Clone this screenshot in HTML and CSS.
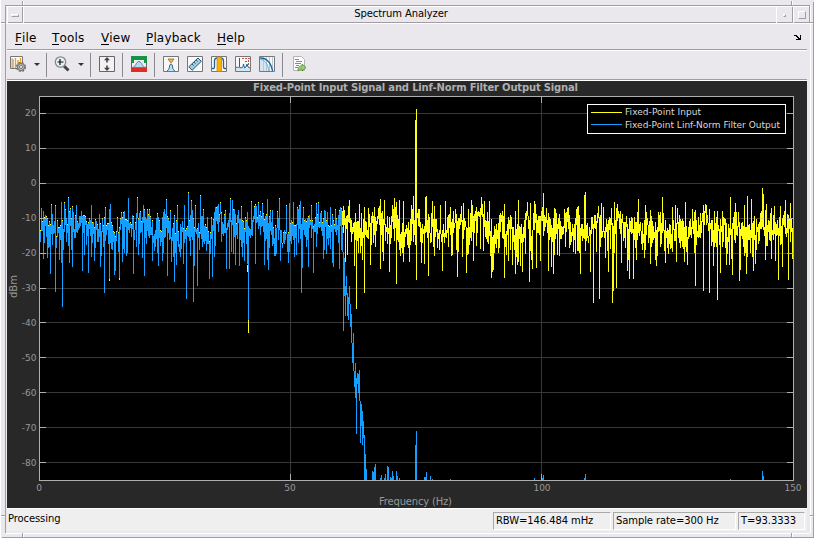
FILE: index.html
```html
<!DOCTYPE html>
<html lang="en">
<head>
    <meta charset="UTF-8">
    <title>Spectrum Analyzer</title>
    <link rel="stylesheet" href="styles.css">
</head>
<body>
    <div class="window">
        <svg class="frame" width="814" height="538" shape-rendering="crispEdges">
            <path stroke="#fff" d="M0.5 0V538M6 6.5H809M1 23.5H7M807 23.5H813M23.5 1V23M792.5 1V6M6 533.5H810M810.5 6V533M1 516.5H6M810 516.5H813M23.5 533V538M792.5 533V538"/>
            <path stroke="#a09ea2" d="M5 5.5H809M5.5 5V533M809.5 5V7M1 22.5H6M809 22.5H813M22.5 1V6M791.5 1V6M813.5 2V538M2 537.5H814M1 515.5H6M810 515.5H813M22.5 533V538M791.5 533V538"/>
        </svg>
        <div class="titlebar">
            <div class="win-btn menu-btn"><span></span></div>
            <div class="title">Spectrum Analyzer</div>
            <div class="win-btn min-btn"><span></span></div>
            <div class="win-btn max-btn"><span></span></div>
        </div>
        <div class="menubar">
            <div class="menu m-file"><span class="key">F</span>ile</div>
            <div class="menu m-tools"><span class="key">T</span>ools</div>
            <div class="menu m-view"><span class="key">V</span>iew</div>
            <div class="menu m-play"><span class="key">P</span>layback</div>
            <div class="menu m-help"><span class="key">H</span>elp</div>
            <svg class="dock" width="8" height="6" shape-rendering="crispEdges"><path d="M0 0h3v1h1v1h1v1h1V0h1v5H2V4h2V3H3V2H2V1H0z"/></svg>
        </div>
        <div class="toolbar">
            <!-- settings -->
            <svg class="icon" width="18" height="18">
                <path fill="#fff" stroke="#777" d="M1.5 1.5h12v12h-12z"/>
                <path stroke="#e9a21c" stroke-width="1.4" d="M4 4v9M6.500 3v10M9 5v7M11.500 3v5"/>
                <path stroke="#aaa" d="M3 3v10"/>
                <circle cx="12" cy="12" r="4.300" fill="#aaa" stroke="#666" stroke-width="1.400" stroke-dasharray="2 1.400"/>
                <circle cx="12" cy="12" r="3.500" fill="#b8b8b8" stroke="#777"/>
                <circle cx="12" cy="12" r="1.500" fill="#fff" stroke="#777"/>
            </svg>
            <span class="arrow"></span>
            <span class="sep"></span>
            <!-- zoom -->
            <svg class="icon zoom" width="18" height="18">
                <path d="M11 11l4.500 4.500" stroke="#444" stroke-width="3"/>
                <circle cx="7.500" cy="7" r="5.200" fill="#e3f3f6" stroke="#888" stroke-width="1.300"/>
                <path d="M5 7.500h6M7.500 4.500v6" stroke="#111" stroke-width="1.200" transform="translate(-.5 -.5)"/>
            </svg>
            <span class="arrow"></span>
            <span class="sep"></span>
            <!-- autoscale -->
            <svg class="icon" width="18" height="18">
                <path fill="#f2f2f2" stroke="#666" d="M1.5 1.5h15v15h-15z"/>
                <path fill="#444" d="M9 2l3 3.200h-2.200v2.300H8.200V5.200H6zM9 16l3-3.200h-2.200v-2.300H8.200v2.300H6z"/>
            </svg>
            <span class="sep"></span>
            <!-- spectral mask -->
            <svg class="icon" width="18" height="18">
                <path fill="#eee" stroke="#666" d="M1.500 1.500h15v15h-15z"/>
                <path fill="#159447" d="M1 1h16v7h-3V5H4v3H1z"/>
                <path fill="#e22b22" d="M1 13h16v4H1z"/>
                <path fill="#b8dced" stroke="#4a87b0" d="M2 12.500c4 0 4-6 7-6s3 6 7 6z"/>
            </svg>
            <span class="sep"></span>
            <!-- peak finder -->
            <svg class="icon" width="18" height="18">
                <path fill="#f8f8f8" stroke="#777" d="M1.500 1.500h15v15h-15z"/>
                <path fill="#bfe0f0" stroke="#2c5d80" d="M5 16c3-1 2-7 4-7s1 6 4 7"/>
                <path fill="#f6b93b" stroke="#96691a" stroke-width=".8" d="M6 4h6L9.500 7.500h-1z"/>
            </svg>
            <!-- cursor measurements -->
            <svg class="icon" width="18" height="18">
                <path fill="#f8f8f8" stroke="#777" d="M1.500 1.500h15v15h-15z"/>
                <path fill="#a4cde2" stroke="#225777" d="M2.800 11.800L12 3l3.300 3.300-9.200 9z"/>
                <path stroke="#225777" d="M6 9l1.500 1.500M8 7l1.500 1.500M10 5l1.500 1.500"/>
            </svg>
            <!-- channel measurements -->
            <svg class="icon" width="18" height="18">
                <path fill="#f8f8f8" stroke="#777" d="M1.500 1.500h15v15h-15z"/>
                <path fill="none" stroke="#19649b" stroke-width="1.300" d="M2 13.500h1.500q1 0 1-2V6q0-3 3-3h3q3 0 3 3v5.500q0 2 1 2H16"/>
                <path fill="#ffad00" stroke="#c98100" stroke-width=".7" d="M7 2h4.500v14.500H7z"/>
            </svg>
            <!-- distortion -->
            <svg class="icon" width="18" height="18">
                <path fill="#f8f8f8" stroke="#777" d="M1.500 1.500h15v15h-15z"/>
                <path fill="#d3e6f1" d="M2 13h14v3H2z"/>
                <path fill="none" stroke="#19649b" d="M2 12.500l1.500-.5 1 1 1-1V3v9l1.500 1 2-1 .5-3 1 4 1.500-1 1-3 1 3 2 1"/>
                <path stroke="#c5533a" stroke-dasharray="2 1" d="M8 3.500h8M14.500 5v5M11 6.500h3"/>
            </svg>
            <!-- ccdf -->
            <svg class="icon" width="18" height="18">
                <path fill="#f8f8f8" stroke="#777" d="M1.500 1.500h15v15h-15z"/>
                <path fill="#d3e6f1" d="M2 4c5 1 8 5 9 12H2z"/>
                <path stroke="#b9c8d8" d="M5.500 2v14M8.500 2v14M11.500 2v14M14.500 2v14"/>
                <path fill="none" stroke="#19649b" stroke-width="1.300" d="M2 3c7 0 11 5 12.500 13"/>
                <path fill="none" stroke="#6dabd2" d="M2 4c5 1 8 5 9 12"/>
            </svg>
            <span class="sep"></span>
            <!-- generate script -->
            <svg class="icon" width="18" height="18">
                <path fill="#fff" stroke="#b5b5b5" d="M3.500 1.500h8l3 3v11h-11z"/>
                <path stroke="#888" d="M5 4.500h4M6 6.500h6M5 8.500h6M6 10.500h3M5 12.500h3"/>
                <path fill="#9bd16c" stroke="#50853a" stroke-width=".8" d="M8 16c0-4 1-5 4-5V9l4 3.500-4 3.500v-2c-2 0-2 1-4 2z"/>
            </svg>
        </div>
        <svg class="plot" id="plot" viewBox="7 81 800 427" width="800" height="427">
            <rect x="7" y="81" width="800" height="427" fill="#282828"/>
            <rect x="39" y="96" width="755" height="385"/>
            <g shape-rendering="crispEdges">
                <path id="yellow" fill="#ffff13"/>
                <path id="blue" fill="#139fff"/>
                <path id="dots" fill="#ffff13"/>
                <path id="grid" stroke="#afafaf" stroke-opacity=".32"/>
                <path id="ticks" stroke="#afafaf"/>
                <rect x="39.5" y="96.5" width="754" height="384" fill="none" stroke="#afafaf"/>
            </g>
            <text class="heading" x="253" y="91" textLength="325">Fixed-Point Input Signal and Linf-Norm Filter Output Signal</text>
            <g id="labels" class="axis"></g>
            <text class="label" x="379" y="505" textLength="73">Frequency (Hz)</text>
            <text class="label" transform="translate(17 298) rotate(-90)" textLength="23">dBm</text>
            <rect x="587.5" y="104.5" width="198" height="29" stroke="#fff" shape-rendering="crispEdges"/>
            <path d="M591 112.500h31" stroke="#ffff13" shape-rendering="crispEdges"/>
            <path d="M591 124.500h31" stroke="#139fff" shape-rendering="crispEdges"/>
            <text class="legend" x="625" y="115" textLength="76">Fixed-Point Input</text>
            <text class="legend" x="625" y="128" textLength="155">Fixed-Point Linf-Norm Filter Output</text>
        </svg>
        <div class="statusbar">
            <div class="state">Processing</div>
            <div class="cell rbw">RBW=146.484 mHz</div>
            <div class="cell rate">Sample rate=300 Hz</div>
            <div class="cell time">T=93.3333</div>
        </div>
    </div>
    <script src="plot.js"></script>
</body>
</html>
```
FILE: styles.css
```css
* {
    box-sizing: border-box;
}

body {
    margin: 0;
    background: #e9e8eb;
    font-family: "DejaVu Sans", Verdana, sans-serif;
    font-size: 10px;
    color: #000;
}

.window {
    position: relative;
    width: 814px;
    height: 538px;
    padding: 7px 7px 6px 7px;
    background: #eae8ed;
    overflow: hidden;
}

.frame {
    position: absolute;
    left: 0;
    top: 0;
    pointer-events: none;
}

/* title bar */
.titlebar {
    display: flex;
    width: 803px;
    height: 17px;
    border-bottom: 1px solid #fff;
    box-shadow: inset 0 -1px #a09ea2;
}

.title {
    flex: 1;
    padding-left: 3px;
    text-align: center;
    line-height: 14px;
    letter-spacing: -0.1px;
}

.win-btn {
    display: flex;
    align-items: center;
    justify-content: center;
    width: 17px;
    height: 16px;
    border-left: 1px solid #fff;
    border-right: 1px solid #a09ea2;
}

.menu-btn {
    width: 16px;
}

.win-btn span {
    border: 1px solid #a09ea2;
    border-top-color: #fff;
    border-left-color: #fff;
}

.menu-btn span {
    width: 8px;
    height: 3px;
}

.min-btn span {
    width: 3px;
    height: 3px;
}

.max-btn span {
    width: 8px;
    height: 8px;
}

/* menus */
.menubar {
    display: flex;
    align-items: center;
    height: 27px;
    width: 800px;
    padding: 0 5px 0 8px;
    border-bottom: 1px solid #fff;
    box-shadow: inset 0 -1px #a09ea2;
    font-size: 12px;
    letter-spacing: 0.15px;
}

.menu {
    padding-top: 2px;
    line-height: 24px;
    white-space: nowrap;
}

.key {
    display: inline-block;
    height: 13px;
    line-height: 13px;
    border-bottom: 1px solid #000;
}

.m-file { width: 37px; }
.m-tools { width: 49px; }
.m-view { width: 45px; }
.m-play { width: 71px; }

.dock {
    margin-left: auto;
    margin-top: 1px;
}

/* toolbar */
.toolbar {
    display: flex;
    align-items: center;
    height: 30px;
    padding: 0 0 3px 2px;
    border-bottom: 1px solid #fff;
    box-shadow: inset 0 -1px #a09ea2;
}

.icon {
    flex: none;
    margin-right: 6px;
}

.arrow {
    margin: 0 6px 0 1px;
    border: 3px solid transparent;
    border-top: 3px solid #333;
    border-bottom: 0;
}

.sep {
    width: 1px;
    height: 24px;
    margin-top: 2px;
    margin-right: 7px;
    background: #8c8a8c;
}

.zoom {
    margin-left: -1px;
}

/* plot */
.plot {
    display: block;
}

.heading {
    font-size: 10px;
    font-weight: bold;
    fill: #afafaf;
}

.axis {
    font-size: 9px;
    fill: #989898;
}

.label {
    font-size: 10px;
    fill: #989898;
}

.legend {
    font-size: 9px;
    fill: #d9d9d9;
}

/* status bar */
.statusbar {
    display: flex;
    gap: 2px;
    height: 23px;
    width: 800px;
    padding: 3px 2px 2px 1px;
    border-top: 1px solid #fff;
    background: #efefef;
    letter-spacing: -0.1px;
}

.state {
    width: 483px;
    line-height: 14px;
}

.cell {
    height: 18px;
    padding-left: 2px;
    line-height: 15px;
    white-space: nowrap;
    border: 1px solid #fff;
    border-top-color: #a9a9a9;
    border-left-color: #a9a9a9;
}

.rbw { width: 118px; }
.rate { width: 123px; }
.time { width: 67px; }
```
FILE: plot.js
```js
// x,value pairs: upper peaks and lower troughs of the spectrum, in plot pixels
const peaks = '40,230 43,211 47,218 55,205 61,202 64,202 68,197 76,205 81,211 85,216 91,205 99,214 105,207 110,204 117,217 121,212 128,198 137,197 143,205 147,209 163,212 166,199 170,210 174,215 177,205 184,205 188,192 191,200 195,205 200,195 203,209 207,217 211,217 215,207 218,204 220,202 230,198 232,200 238,210 247,212 251,201 258,202 262,203 267,199 272,210 279,198 286,205 289,203 293,202 297,207 303,207 309,215 311,205 316,203 318,202 324,210 327,212 330,207 335,209 342,211 346,216 349,200 359,204 361,213 364,207 368,208 374,207 378,208 384,200 392,205 399,200 403,201 411,205 413,196 419,209 425,197 426,196 432,201 440,205 445,201 450,207 455,209 463,203 471,200 476,207 480,208 484,201 489,201 499,215 504,204 515,211 518,200 525,213 530,203 534,201 543,193 554,208 564,209 568,207 577,207 584,195 585,192 591,217 594,215 601,203 603,207 614,202 619,214 625,222 631,217 638,199 645,205 650,210 658,212 662,197 672,207 675,205 685,202 692,209 702,213 706,205 714,211 722,211 730,197 735,203 744,205 747,196 751,199 762,188 763,194 766,204 774,206 780,206 785,200 790,203';
const troughs = '39,284 42,231 47,258 50,274 55,292 59,260 61,263 62,307 66,242 69,263 72,267 82,271 84,255 88,273 94,261 104,293 109,281 114,275 119,279 122,262 127,253 133,274 138,255 142,258 144,276 152,261 157,253 162,261 167,276 171,262 174,282 176,265 180,257 186,299 190,256 193,302 197,286 201,239 210,254 212,277 221,242 226,269 229,269 231,252 235,265 239,266 242,257 244,261 247,264 248,320 255,264 264,265 268,270 275,256 282,248 287,252 294,257 301,293 302,268 308,267 313,273 324,250 326,254 332,263 333,267 339,269 345,262 347,255 354,266 356,309 362,260 364,293 371,245 375,247 380,269 383,261 389,272 396,284 403,262 408,248 415,245 416,280 421,263 424,264 428,276 434,256 437,248 442,271 452,255 457,277 462,257 466,273 473,261 480,249 483,251 491,278 492,272 498,253 504,278 508,261 512,265 517,265 520,266 522,272 529,282 536,268 540,261 548,271 551,267 553,274 559,256 575,254 580,274 590,272 593,303 599,299 605,258 608,272 612,303 613,291 616,288 621,263 627,271 629,279 633,279 650,264 661,244 665,263 676,262 684,262 687,265 695,286 703,291 709,293 717,300 720,273 727,254 732,275 739,281 746,274 753,271 755,264 765,260 771,259 775,261 778,280 782,267 788,280 792,259';

// rolloff and leakage above the passband edge: x,top,bottom
const tail = '342,227,252 343,252,331 344,258,296 345,286,316 346,276,295 347,293,316 348,297,320 349,286,304 350,304,327 351,314,343 352,343,363 353,333,371 354,371,387 355,363,398 356,378,434 357,373,384 358,374,393 359,370,401 360,401,443 361,404,426 362,411,445 363,421,438 364,435,480 365,454,480 366,469,480 372,471,480 373,472,480 374,467,480 375,464,480 380,478,480 381,475,480 384,478,480 385,474,480 387,466,480 388,467,480 390,477,480 391,478,480 392,471,480 393,476,480 396,471,480 397,476,480 399,478,480 415,445,480 416,431,480 424,477,480 425,477,480 426,472,480 430,476,480 432,479,480 450,479,480 534,478,480 542,478,480 543,475,480 584,478,480 585,474,480 730,479,480 762,471,480 763,476,480';

const parse = s => s.split(' ').map(p => p.split(',').map(Number));
const hi = new Map(parse(peaks));
const lo = new Map(parse(troughs));

let seed = 41;
function rand() {
    seed = (seed * 1664525 + 1013904223) % 4294967296;
    return seed / 4294967296;
}

const bar = (x, a, b) => `M${x} ${a}h1V${b}h-1z`;
let blue = '', yellow = '', dots = '';
let level = 222;
let lastTop = 225, lastBottom = 240;

for (let x = 39; x < 793; x++) {
    // the noise level drifts slowly between columns
    level += (rand() - 0.5) * 14 + (222 - level) * 0.2;
    let top = hi.has(x) ? hi.get(x) : Math.round(level - 10 + rand() * 16);
    let bottom = lo.has(x) ? lo.get(x) : Math.round(Math.max(top, level) + 5 + rand() * rand() * 38);
    // neighbouring columns have to touch, the trace is one line
    if (!hi.has(x)) top = Math.min(top, lastBottom);
    if (!lo.has(x)) bottom = Math.max(bottom, lastTop);
    if (x < 342) {
        blue += bar(x, top, bottom);
        if (rand() < 0.55) dots += bar(x, top, top + 1);
    } else {
        yellow += bar(x, top, bottom);
    }
    lastTop = top;
    lastBottom = bottom;
}
dots += bar(248, 320, 333) + bar(247, 265, 272) + bar(109, 279, 281) + bar(119, 278, 280);
yellow += bar(415, 120, 245) + bar(416, 109, 280);
parse(tail).forEach(([x, a, b]) => blue += bar(x, a, b));

document.getElementById('blue').setAttribute('d', blue);
document.getElementById('yellow').setAttribute('d', yellow);
document.getElementById('dots').setAttribute('d', dots);

let grid = '', ticks = '', labels = '';
[113, 148, 183, 218, 253, 288, 322, 357, 392, 427, 462].forEach((y, i) => {
    grid += `M40 ${y + 0.5}H793`;
    ticks += `M40 ${y + 0.5}h6M787 ${y + 0.5}h6`;
    labels += `<text x="36.500" y="${i < 6 ? y + 3 : y + 4}" text-anchor="end">${20 - i * 10}</text>`;
});
[290, 541].forEach(x => {
    grid += `M${x + 0.5} 97V480`;
    ticks += `M${x + 0.5} 97v6M${x + 0.5} 474v6`;
});
[[39, 0], [290, 50], [542, 100], [793, 150]].forEach(([x, t]) => {
    labels += `<text x="${x}" y="491" text-anchor="middle">${t}</text>`;
});
document.getElementById('grid').setAttribute('d', grid);
document.getElementById('ticks').setAttribute('d', ticks);
document.getElementById('labels').innerHTML = labels;
```
